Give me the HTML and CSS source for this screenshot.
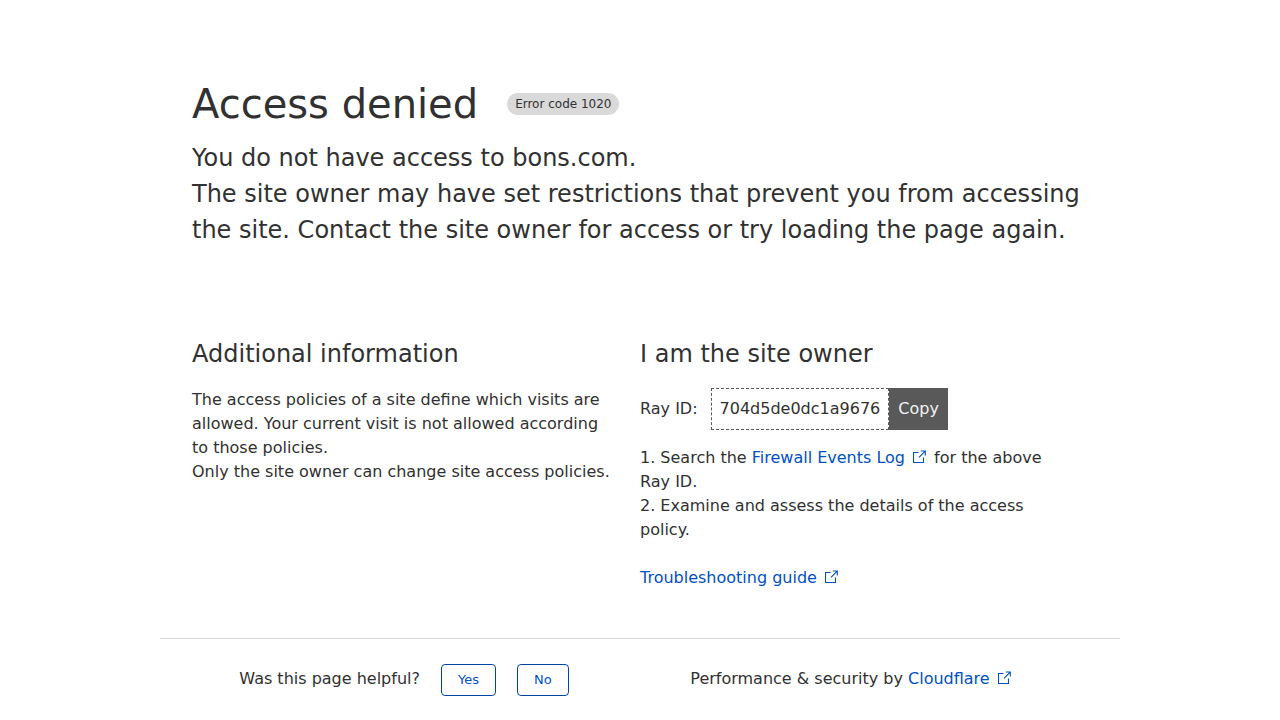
FILE: index.html
```html
<!DOCTYPE html>
<html lang="en">
<head>
<meta charset="utf-8">
<meta name="viewport" content="width=device-width, initial-scale=1">
<title>Access denied</title>
<link rel="stylesheet" href="styles.css">
</head>
<body>
<svg class="sprite" aria-hidden="true">
  <symbol id="external" viewBox="0 0 13 14">
    <path d="M5.5 2.5H.5V12.5H10.5V7.5M6 7.3L12.2 1.1M7.8 1H12.3V5.5" fill="none" stroke="currentColor" stroke-width="1.1"/>
  </symbol>
</svg>
<div class="page">
  <header class="header">
    <div class="heading">
      <h1 class="title">Access denied</h1>
      <span class="code">Error code 1020</span>
    </div>
    <p class="lead">You do not have access to bons.com.</p>
    <p class="lead">The site owner may have set restrictions that prevent you from accessing the site. Contact the site owner for access or try loading the page again.</p>
  </header>
  <main class="columns">
    <section class="column">
      <h2 class="subtitle">Additional information</h2>
      <p class="text">The access policies of a site define which visits are allowed. Your current visit is not allowed according to those policies.</p>
      <p class="text">Only the site owner can change site access policies.</p>
    </section>
    <section class="column">
      <h2 class="subtitle">I am the site owner</h2>
      <div class="ray">
        <span class="ray-label">Ray ID:</span>
        <code class="ray-id">704d5de0dc1a9676</code>
        <button class="copy" type="button">Copy</button>
      </div>
      <div class="steps">
        <p class="text">1. Search the <a class="link" href="#">Firewall Events Log<svg class="icon" aria-hidden="true"><use href="#external"/></svg></a> for the above Ray ID.</p>
        <p class="text">2. Examine and assess the details of the access policy.</p>
      </div>
      <p class="text guide"><a class="link" href="#">Troubleshooting guide<svg class="icon" aria-hidden="true"><use href="#external"/></svg></a></p>
    </section>
  </main>
  <footer class="footer">
    <div class="feedback">
      <span class="question">Was this page helpful?</span>
      <button class="answer" type="button">Yes</button>
      <button class="answer" type="button">No</button>
    </div>
    <div class="credit">Performance &amp; security by <a class="link" href="#">Cloudflare<svg class="icon" aria-hidden="true"><use href="#external"/></svg></a></div>
  </footer>
</div>
</body>
</html>
```
FILE: styles.css
```css
* { box-sizing: border-box; }
body {
  margin: 0;
  background: #fff;
  color: #313131;
  font: 16px/24px "DejaVu Sans", sans-serif;
}
h1, h2, p { margin: 0; font-weight: 400; }
.sprite { position: absolute; width: 0; height: 0; }
.page { max-width: 960px; margin: 0 auto; padding-top: 74px; }
.header { padding: 0 32px; }
.heading { display: flex; align-items: center; gap: 29px; margin-bottom: 6px; }
.title { font-size: 40px; line-height: 60px; }
.code {
  padding: 2px 8px;
  border-radius: 11px;
  background: #d9d9d9;
  font-size: 12px;
  line-height: 18px;
}
.lead { font-size: 24px; line-height: 36px; }
.columns { display: grid; grid-template-columns: 1fr 1fr; padding: 88px 32px 48px; }
.column { padding-right: 28px; }
.subtitle { margin-bottom: 16px; font-size: 24px; line-height: 36px; }
.ray { display: flex; align-items: center; }
.ray-label { margin-right: 13px; }
.ray-id {
  padding: 8px;
  border: 1px dashed #595959;
  font: inherit;
}
.copy {
  padding: 9px;
  border: 0;
  background: #595959;
  color: #f2f2f2;
  font: inherit;
}
.steps { margin-top: 16px; }
.guide { margin-top: 24px; }
.link { color: #0051c3; text-decoration: none; }
.icon { width: 13px; height: 14px; margin: 0 3px 0 8px; vertical-align: -1px; }
.footer {
  display: grid;
  grid-template-columns: 1fr 1fr;
  padding: 25px 32px 24px;
  border-top: 1px solid #d9d9d9;
}
.feedback, .credit { padding-right: 24px; }
.feedback { display: flex; align-items: flex-start; justify-content: center; gap: 21px; }
.question, .credit { margin-top: 3px; }
.answer {
  padding: 5px 16px;
  border: 1px solid #0045a6;
  border-radius: 4px;
  background: #fff;
  color: #0051c3;
  font: 13px/20px "DejaVu Sans", sans-serif;
}
.credit { text-align: center; }
```
